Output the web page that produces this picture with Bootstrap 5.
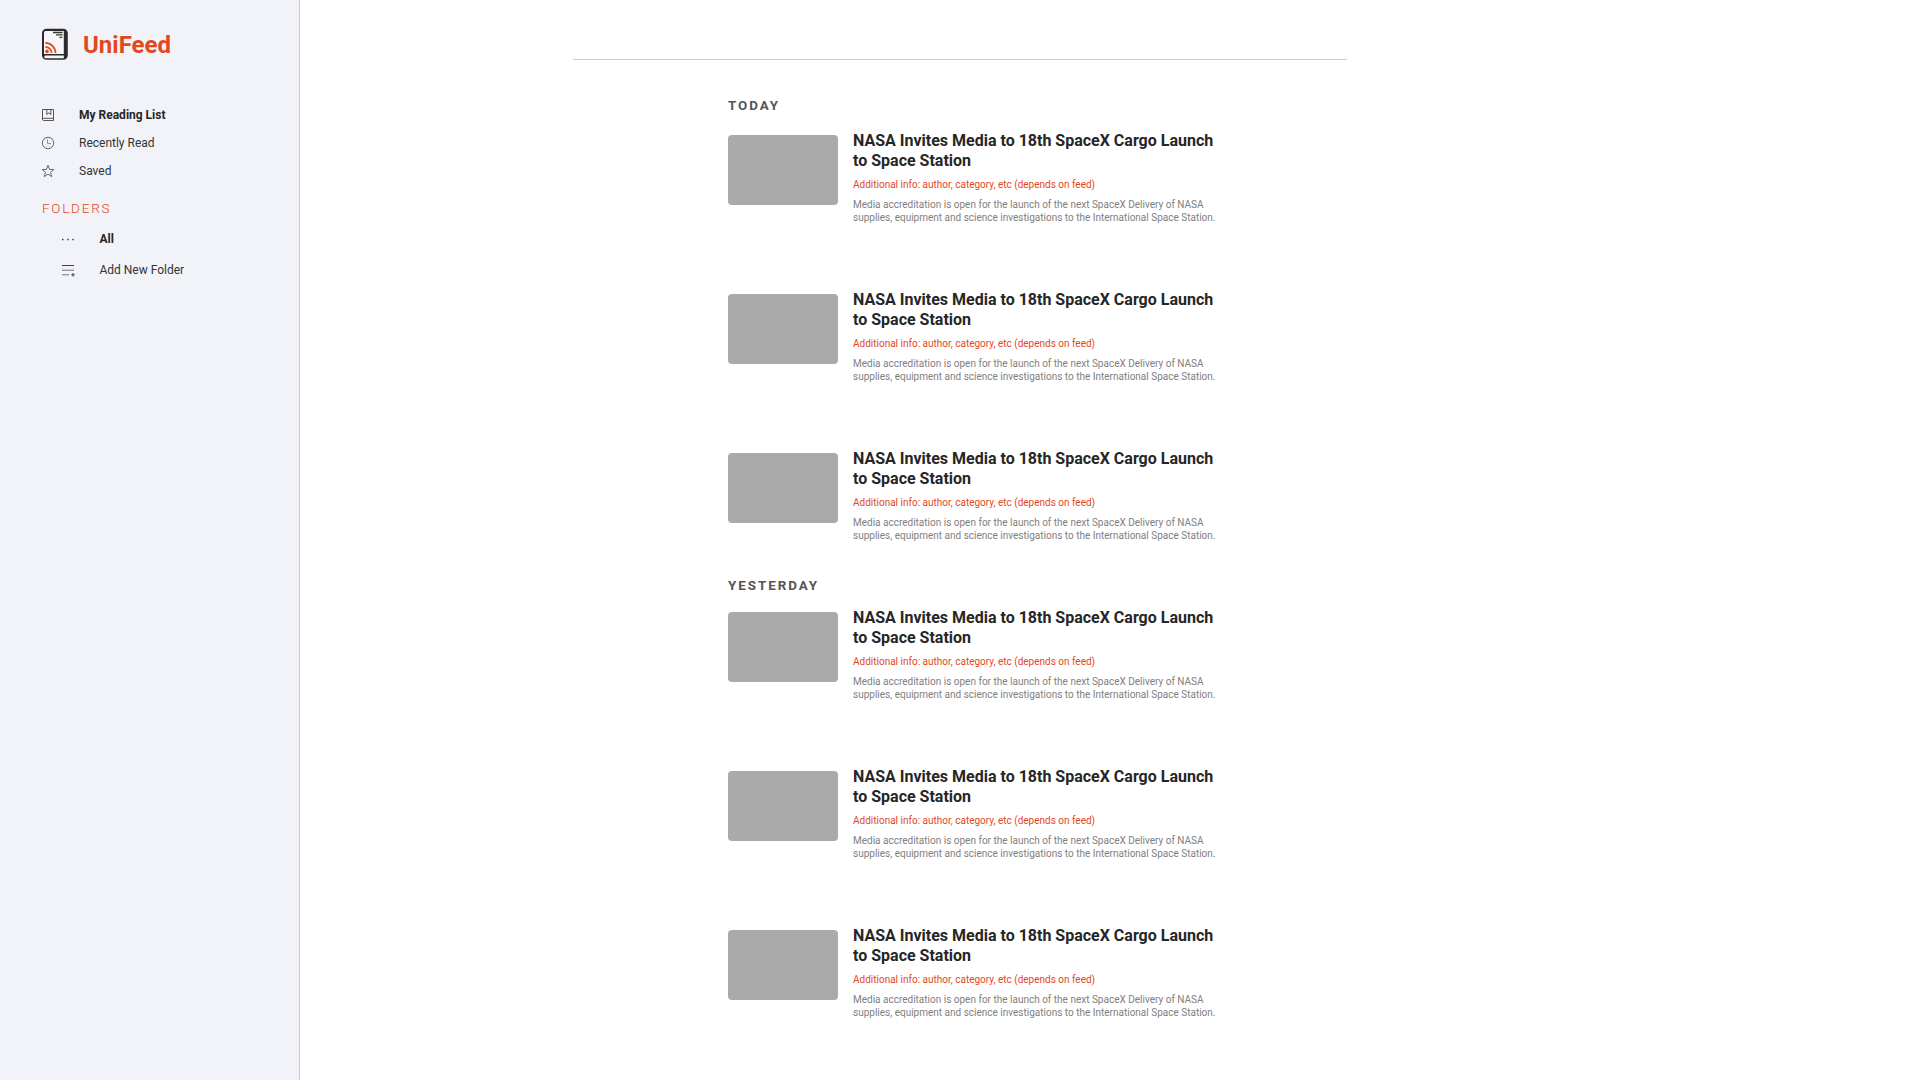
<!DOCTYPE html>
<html lang="en">
<head>
<meta charset="utf-8">
<meta name="viewport" content="width=device-width, initial-scale=1">
<title>UniFeed</title>
<link href="https://cdn.jsdelivr.net/npm/bootstrap@5.3.0/dist/css/bootstrap.min.css" rel="stylesheet">
<style>
body{font-family:Roboto,"Liberation Sans",sans-serif;color:#262626;background:#fff}
.side{width:300px;background:#f2f3f9;border-right:1px solid #c9c9cc;padding:28px 0 0 41px}
.brand-row{height:34px}
.brand-name{font-size:24px;font-weight:700;line-height:34px;color:#e2481d;margin-left:14px}
.side-nav{margin-top:39px}
.side-nav .nav-link,.folder-nav .nav-link{font-size:12px;line-height:28px;padding:0;color:#333;gap:24px}
.side-nav .nav-link{height:28px}
.folder-nav .nav-link{height:31px;line-height:31px}
.side-nav .active,.folder-nav .active{font-weight:700;color:#262626!important}
.side svg.ico{width:14px;height:14px;flex:none;fill:none;stroke:#444}
.folder-title{font-size:13.500px;font-weight:300;line-height:20px;letter-spacing:1.750px;color:#e2481d;margin:13px 0 6px 1px}
.folder-nav{padding-left:20.400px}
.feed-rule{width:774px;margin:59px 0 0 273px;height:1px;background:#c9c9c9}
.feed{width:492px;margin-left:428px}
.first-day{padding-top:36px}
.next-day{padding-top:34px}
.day{font-size:13.400px;font-weight:700;line-height:20px;letter-spacing:1.950px;color:#555}
.stories{gap:70px}
#today{padding-top:19px}
#yesterday{padding-top:16px}
.story{height:89px;gap:15px}
.thumb{width:110px;height:70px;border-radius:4px;background:#aaa;flex:none}
.story-text{margin-top:-4px}
.story-title{font-size:16px;font-weight:700;line-height:20px;color:#262626}
.meta{font-size:10px;line-height:14px;color:#e2481d;margin-top:7px}
.desc{font-size:10px;line-height:13px;color:#808080;margin-top:6px}
</style>
</head>
<body>
<div class="d-flex vh-100 overflow-hidden">
<aside class="side flex-shrink-0">
  <div class="brand-row d-flex align-items-center">
    <svg width="28" height="34" viewBox="0 0 28 34"><rect x="1" y=".8" width="25.800" height="31" rx="4.500" fill="#2b2b2b"/><path d="M4.500 3h18.300v23H3V4.500Q3 3 4.500 3z" fill="#f5f6fa"/><path d="M4 27.600h18.800v2.700H4q-1.800-1.300 0-2.700z" fill="#f5f6fa"/><path d="M12 4.500h9.500M15 6.800h6.500M18.500 9.300h2.800" stroke="#333" stroke-width="1.300"/><g fill="none" stroke="#e2481d" stroke-width="1.700"><path d="M4.300 18.800a6.200 6.200 0 0 1 6.200 6.200M4.300 14.900a10.200 10.200 0 0 1 10.200 10.200"/></g><circle cx="6" cy="23.400" r="1.800" fill="#e2481d"/></svg>
    <span class="brand-name">UniFeed</span>
  </div>
  <nav class="side-nav nav flex-column">
    <a class="nav-link active d-flex align-items-center" href="#"><svg class="ico" viewBox="0 0 14 14"><path d="M1.500 1.500h11v9M12.500 10.500v2h-10q-1-.2-1-1.200 0-1 1-1h10M1.500 1.500v10M5.800 1.500v5l2-1.600 2 1.600v-5" stroke-width=".9"/></svg><span>My Reading List</span></a>
    <a class="nav-link d-flex align-items-center" href="#"><svg class="ico" viewBox="0 0 14 14"><circle cx="7" cy="7" r="5.700" stroke-width=".8"/><path d="M6.500 3.500v4H10" stroke="#888" stroke-width=".9"/></svg><span>Recently Read</span></a>
    <a class="nav-link d-flex align-items-center" href="#"><svg class="ico" viewBox="0 0 14 14"><path d="M7 1.300l1.600 4.100 4.200.2-3.300 2.700 1.200 4.300L7 10.200l-3.700 2.400 1.200-4.300L1.200 5.600l4.200-.2z" stroke-width=".8"/></svg><span>Saved</span></a>
  </nav>
  <div class="folder-title">FOLDERS</div>
  <nav class="folder-nav nav flex-column">
    <a class="nav-link active d-flex align-items-center" href="#"><svg class="ico" viewBox="0 0 14 14"><path d="M1 6.500h1.500M6.200 6.500h1.500M11.300 6.500h1.500" stroke-width="1.300"/></svg><span>All</span></a>
    <a class="nav-link d-flex align-items-center" href="#"><svg class="ico" viewBox="0 0 14 14"><path d="M1 1.500h12"/><path d="M1 6.200h12M1 10.800h7" stroke="#777"/><path d="M10.200 10.800h3.600M12 9v3.600"/></svg><span>Add New Folder</span></a>
  </nav>
</aside>
<main class="flex-grow-1">
  <div class="feed-rule"></div>
  <section class="feed first-day">
    <h2 class="day mb-0">TODAY</h2>
    <div class="stories d-flex flex-column" id="today"></div>
  </section>
  <section class="feed next-day">
    <h2 class="day mb-0">YESTERDAY</h2>
    <div class="stories d-flex flex-column" id="yesterday"></div>
  </section>
</main>
</div>
<script src="https://cdn.jsdelivr.net/npm/bootstrap@5.3.0/dist/js/bootstrap.bundle.min.js"></script>
<script>
const story = `<article class="story d-flex"><div class="thumb"></div><div class="story-text"><h3 class="story-title mb-0">NASA Invites Media to 18th SpaceX Cargo Launch<br>to Space Station</h3><p class="meta mb-0">Additional info: author, category, etc (depends on feed)</p><p class="desc mb-0">Media accreditation is open for the launch of the next SpaceX Delivery of NASA<br>supplies, equipment and science investigations to the International Space Station.</p></div></article>`;
for (const id of ['today', 'yesterday']) document.getElementById(id).innerHTML = story.repeat(3);
</script>
</body>
</html>
